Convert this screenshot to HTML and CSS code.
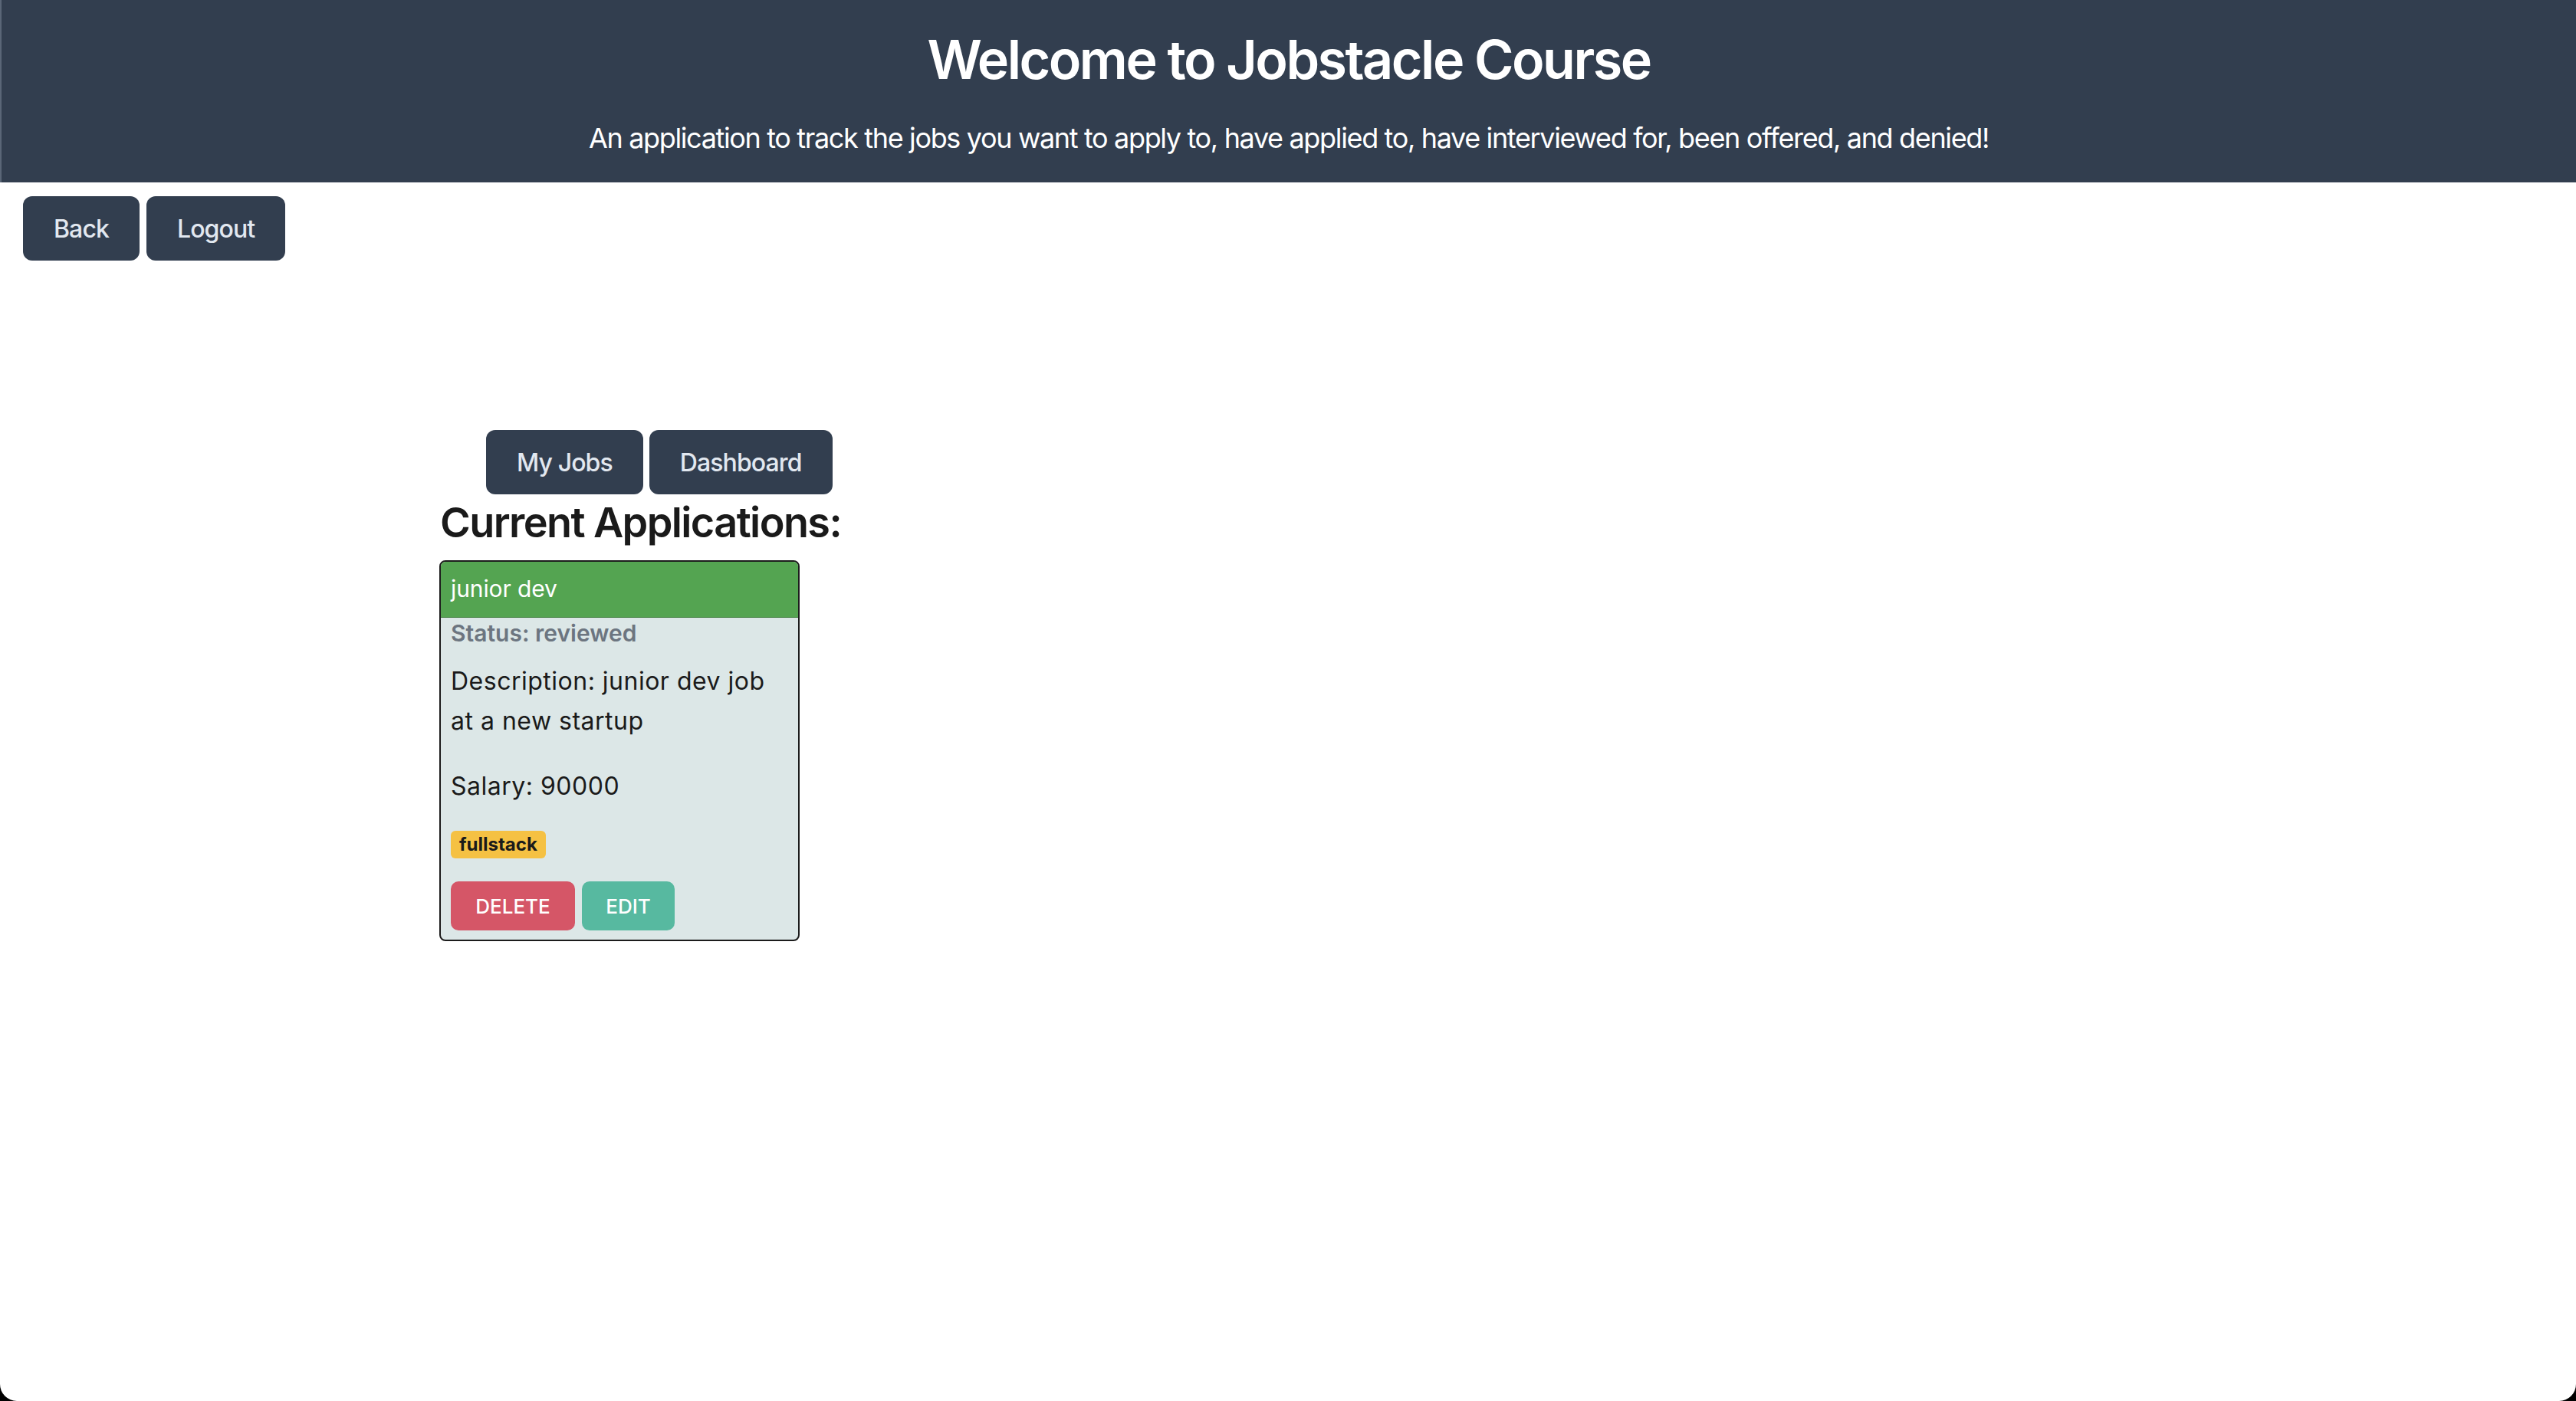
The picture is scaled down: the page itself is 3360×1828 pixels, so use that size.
FILE: index.html
```html
<!DOCTYPE html>
<html lang="en">
<head>
<meta charset="utf-8">
<title>Jobstacle Course</title>
<link rel="stylesheet" href="styles.css">
</head>
<body>
<div class="page">
  <header class="hero">
    <h1 class="hero-title">Welcome to Jobstacle Course</h1>
    <p class="hero-sub">An application to track the jobs you want to apply to, have applied to, have interviewed for, been offered, and denied!</p>
  </header>

  <nav class="toolbar">
    <button class="btn btn-back">Back</button>
    <button class="btn btn-logout">Logout</button>
  </nav>

  <main class="content">
    <div class="tabs">
      <button class="btn">My Jobs</button>
      <button class="btn">Dashboard</button>
    </div>
    <h2 class="section-title">Current Applications:</h2>

    <div class="job-card">
      <div class="job-head">junior dev</div>
      <div class="job-body">
        <div class="job-status">Status: reviewed</div>
        <p class="job-desc">Description: junior dev job at a new startup</p>
        <p class="job-salary">Salary: 90000</p>
        <div class="tags"><span class="tag">fullstack</span></div>
        <div class="job-actions">
          <button class="act act-delete">DELETE</button>
          <button class="act act-edit">EDIT</button>
        </div>
      </div>
    </div>
  </main>
</div>
</body>
</html>
```

FILE: styles.css
```css
html {
  background: #000;
}
body {
  margin: 0;
  font-family: Inter, "Noto Sans", "Liberation Sans", sans-serif;
  color: #1a1a1a;
}
.page {
  min-height: 1828px;
  box-sizing: border-box;
  background: #fff;
  border-radius: 0 0 22px 22px;
  overflow: hidden;
}
.hero {
  background: #323e4f;
  color: #fff;
  text-align: center;
  height: 238px;
  box-sizing: border-box;
  padding-top: 35px;
  border-left: 2px solid #5a6677;
}
.hero-title {
  margin: 0;
  font-size: 70px;
  line-height: 86px;
  font-weight: 600;
  letter-spacing: -2.5px;
}
.hero-sub {
  margin: 32px 0 0;
  font-size: 36px;
  line-height: 54px;
  font-weight: 400;
  letter-spacing: -1.35px;
}
.toolbar {
  display: flex;
  gap: 9px;
  padding: 18px 0 0 30px;
}
.btn {
  height: 84px;
  padding: 0 40px;
  border: none;
  border-radius: 12px;
  background: #323e4f;
  color: #e2e8f0;
  font-family: Inter, "Noto Sans", sans-serif;
  font-size: 32px;
  font-weight: 500;
  letter-spacing: -0.9px;
}
.content {
  padding: 221px 0 0 573px;
}
.tabs {
  display: flex;
  gap: 8px;
  margin-left: 61px;
}
.section-title {
  margin: 5px 0 0 1px;
  font-size: 54px;
  line-height: 64px;
  font-weight: 600;
  color: #1a1a1a;
  letter-spacing: -1.6px;
}
.job-card {
  margin-top: 17px;
  width: 470px;
  box-sizing: border-box;
  border: 2px solid #1c1c1c;
  border-radius: 8px;
  overflow: hidden;
  background: #dce7e7;
}
.job-head {
  height: 73px;
  line-height: 70px;
  padding: 0 13px;
  background: #54a451;
  border-bottom: 1px solid #3f7d3d;
  box-sizing: border-box;
  color: #fff;
  font-size: 30px;
  letter-spacing: -0.1px;
}
.job-body {
  padding: 0 13px 12px;
}
.job-status {
  font-size: 30px;
  line-height: 40px;
  font-weight: 600;
  color: #6c7580;
}
.job-desc {
  margin: 17px 0 0;
  font-size: 32px;
  line-height: 52px;
  letter-spacing: 0.5px;
}
.job-salary {
  margin: 33px 0 0;
  font-size: 32px;
  line-height: 52px;
  letter-spacing: 0.5px;
}
.tags {
  margin-top: 32px;
  display: flex;
}
.tag {
  height: 36px;
  line-height: 36px;
  padding: 0 11px;
  border-radius: 6px;
  background: #f5c143;
  color: #1a1a1a;
  font-size: 24px;
  font-weight: 700;
}
.job-actions {
  margin-top: 30px;
  display: flex;
  gap: 9px;
}
.act {
  height: 64px;
  border: none;
  border-radius: 10px;
  color: #fff;
  font-family: Inter, "Noto Sans", sans-serif;
  font-size: 26px;
  font-weight: 500;
}
.act-delete {
  width: 162px;
  background: #d55667;
}
.act-edit {
  width: 121px;
  background: #57b9a0;
}
```
